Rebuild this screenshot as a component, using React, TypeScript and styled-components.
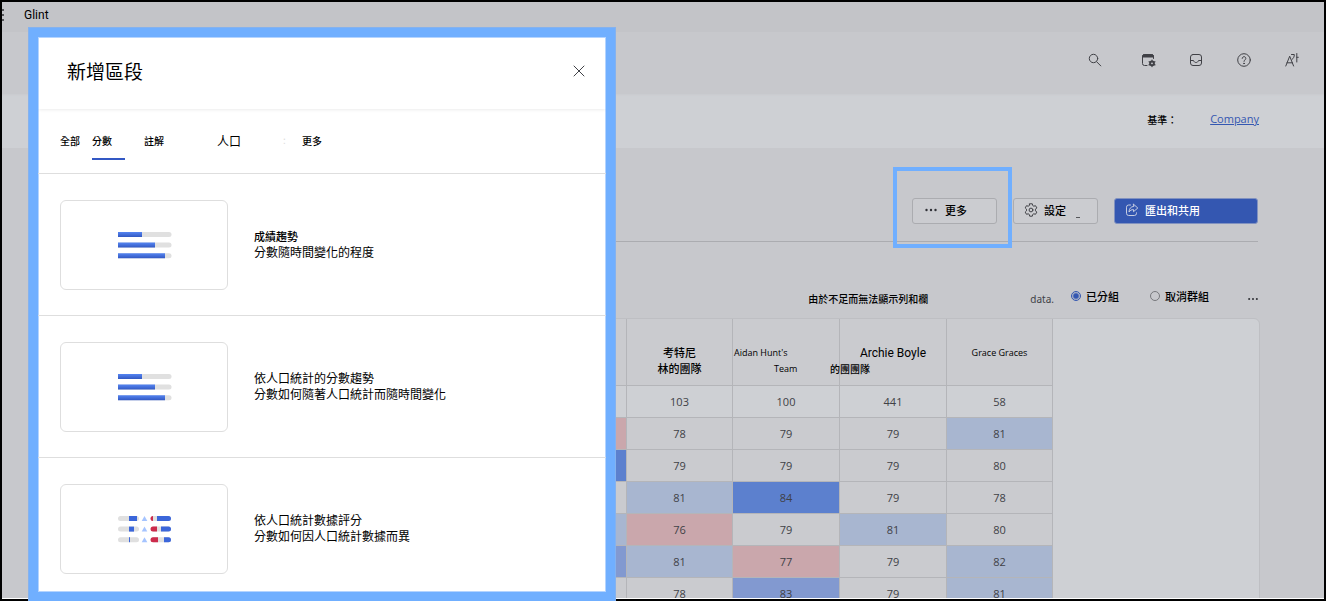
import React from 'react';
import styled, { createGlobalStyle } from 'styled-components';

const latin = '"Open Sans", "Noto Sans CJK TC", sans-serif';
const cjk = '"Noto Sans CJK TC", "Open Sans", sans-serif';

const GlobalStyle = createGlobalStyle`
  * { box-sizing: border-box; }
  body { margin: 0; font-family: ${cjk}; font-size: 11px; color: #000; }
  button { font: inherit; color: inherit; background: none; border: 0; padding: 0; }
`;

const Shell = styled.div`
  position: relative;
  height: 100vh;
  overflow: hidden;
`;

const Frame = styled.div`
  height: 100%;
  display: flex;
  flex-direction: column;
  border: 2px solid #000;
  background: #c7c8cc;
  overflow: hidden;
`;

const AppBar = styled.header`
  flex: none;
  display: flex;
  align-items: center;
  gap: 20px;
  height: 30px;
  padding-bottom: 4px;
  background: #c3c4c8;
  font: 12px/16px Roboto, ${latin};
`;

const Waffle = styled.span`
  width: 2px;
  height: 12px;
  background: repeating-linear-gradient(#55565a 0 2px, transparent 2px 5px);
`;

const Nav = styled.nav`
  flex: none;
  display: flex;
  justify-content: flex-end;
  align-items: center;
  gap: 32px;
  height: 62px;
  padding: 0 24px 6px 0;
  svg { display: block; }
`;

const IconButton = styled.button<{ $after?: number }>`
  width: 16px;
  height: 16px;
  margin-right: ${(p) => p.$after ?? 0}px;
  color: #404146;
`;

const Baseline = styled.div`
  flex: none;
  display: flex;
  justify-content: flex-end;
  align-items: center;
  gap: 33px;
  height: 54px;
  padding: 0 65px 4px 0;
  background: #ced0d4;
  box-shadow: inset 0 2px 2px -1px #c9cace;
  font-size: 10px;
  font-weight: 500;
`;

const Link = styled.a`
  font: 11px/16px ${latin};
  color: #3457b1;
`;

const Main = styled.main`
  flex: 1;
  min-height: 0;
  display: flex;
  flex-direction: column;
  padding: 50px 64px 0 62px;
  overflow: hidden;
  border-bottom: 1px solid #fff;
`;

const Actions = styled.div`
  flex: none;
  display: flex;
  justify-content: flex-end;
  gap: 16px;
  margin-right: 2px;
  padding-bottom: 17px;
  border-bottom: 1px solid #abacb0;
`;

const Highlight = styled.div`
  position: relative;
  &::after {
    content: '';
    position: absolute;
    inset: -31px -15px -24px -19px;
    border: 4px solid #70afff;
    pointer-events: none;
  }
`;

const ActionButton = styled.button<{ $primary?: boolean }>`
  display: flex;
  align-items: center;
  gap: 6px;
  width: ${(p) => (p.$primary ? 144 : 85)}px;
  height: 26px;
  padding: 0 10px 2px;
  border: 1px solid ${(p) => (p.$primary ? '#8192c0' : '#abacb0')};
  border-radius: 3px;
  background: ${(p) => (p.$primary ? '#3457b1' : '#cbccd0')};
  color: ${(p) => (p.$primary ? '#fff' : '#000')};
  font-weight: 500;
  line-height: 16px;
  svg { flex: none; }
`;

const Mark = styled.span`
  align-self: flex-end;
  width: 4px;
  height: 1px;
  margin: 0 0 3px 4px;
  background: #55565a;
`;

const Controls = styled.div`
  flex: none;
  display: flex;
  justify-content: flex-end;
  align-items: center;
  height: 76px;
  padding: 36px 1px 0 0;
  line-height: 16px;
`;

const Notice = styled.span`
  padding-top: 1px;
  font-size: 10px;
  font-weight: 500;
`;

const Data = styled.span`
  margin: 0 17px 0 102px;
  padding-top: 2px;
  font: 11px/16px "Noto Sans", ${latin};
  font-size: 10px;
  color: #404146;
`;

const RadioLabel = styled.label`
  display: flex;
  align-items: center;
  gap: 5px;
  margin-right: 31px;
  padding-bottom: 4px;
  font-weight: 500;
  & + & { margin-right: 38px; }
`;

const Radio = styled.input`
  appearance: none;
  width: 10px;
  height: 10px;
  margin: 0;
  border: 1px solid #77787c;
  border-radius: 50%;
  &:checked {
    border-color: #3457b1;
    background: radial-gradient(circle, #3457b1 2px, transparent 4px);
  }
`;

const OptionsButton = styled.button`
  padding-bottom: 4px;
`;

const Card = styled.section`
  flex: none;
  display: grid;
  grid-template-columns: 1fr 206px;
  border: 1px solid #bebfc3;
  border-radius: 6px;
  background: #ced0d4;
`;

const Table = styled.table`
  width: 100%;
  table-layout: fixed;
  border-collapse: collapse;
  font: 11px/16px ${latin};
  color: #404146;
  text-align: center;
`;

const HeadCell = styled.th`
  height: 66px;
  padding: 18px 0 0;
  border-right: 1px solid #b4b5b9;
  background: #cacbcf;
  color: #000;
  font-weight: 400;
  vertical-align: middle;
`;

const tones = {
  none: '#cacbcf',
  plain: '#ced0d4',
  light: '#a8b6d0',
  mid: '#8299d0',
  strong: '#5c80ce',
  red: '#caa7ac',
};
type Tone = keyof typeof tones;

const Score = styled.td<{ $tone: Tone }>`
  height: 32px;
  padding: 1px 0 0;
  border-top: 1px solid #b4b5b9;
  border-right: 1px solid #b4b5b9;
  background: ${(p) => tones[p.$tone]};
`;

const Name = styled.div<{ $size?: number; $align?: string; $indent?: number; $weight?: number }>`
  margin-left: ${(p) => p.$indent ?? 0}px;
  font-size: ${(p) => p.$size ?? 9}px;
  font-weight: ${(p) => p.$weight ?? 400};
  text-align: ${(p) => p.$align ?? 'center'};
  white-space: nowrap;
`;

const WideName = styled(Name)`
  font-family: Roboto, sans-serif;
`;

const Drawer = styled.aside`
  position: absolute;
  top: 27px;
  bottom: -1px;
  left: 28px;
  width: 588px;
  border: 10px solid #70afff;
  outline: 1px solid #85b2ee;
  outline-offset: -1px;
  background: #fff;
  box-shadow: inset 0 0 0 1px #b4d4ff;
  display: flex;
  flex-direction: column;
  overflow: hidden;
`;

const DrawerHead = styled.div`
  flex: none;
  display: flex;
  align-items: center;
  justify-content: space-between;
  height: 72px;
  padding: 0 21px 4px 29px;
  background: linear-gradient(#fff, #fff) 1px 1px / calc(100% - 2px) 100% no-repeat;
  box-shadow: 0 2px 3px -1px #00000014;
`;

const Title = styled.h2`
  margin: 0;
  font-size: 19px;
  line-height: 28px;
  font-weight: 400;
`;

const Close = styled.button`
  display: flex;
  svg { display: block; }
`;

const Tabs = styled.div`
  flex: none;
  display: flex;
  height: 65px;
  padding: 19px 0 0 22px;
  border-bottom: 1px solid #dedede;
`;

const Tab = styled.button<{ $width: number; $size?: number; $active?: boolean }>`
  width: ${(p) => p.$width}px;
  height: 32px;
  padding-bottom: 6px;
  border-bottom: 2px solid ${(p) => (p.$active ? '#3358c4' : 'transparent')};
  font-size: ${(p) => p.$size ?? 10}px;
  font-weight: ${(p) => (p.$size === 12 ? 400 : 500)};
  text-align: left;
`;

const TabGap = styled.span`
  width: 19px;
`;

const Dots = styled.span`
  width: 19px;
  padding-top: 4px;
  color: #ddd;
  font-size: 10px;
`;

const Option = styled.div`
  flex: none;
  display: flex;
  align-items: center;
  gap: 26px;
  height: 142px;
  padding-left: 22px;
  border-bottom: 1px solid #dedede;
  font-size: 12px;
  line-height: 16px;
  white-space: nowrap;
  &:last-child { border-bottom: 0; }
`;

const Thumb = styled.button`
  display: flex;
  align-items: center;
  justify-content: center;
  width: 168px;
  height: 90px;
  padding-left: 2px;
  border: 1px solid #dedede;
  border-radius: 6px;
`;

const OptionText = styled.div`
  padding-bottom: 2px;
`;

const OptionTitle = styled.div<{ $small?: boolean }>`
  font-size: ${(p) => (p.$small ? 11 : 12)}px;
  font-weight: ${(p) => (p.$small ? 500 : 400)};
`;

const stroke = { fill: 'none', stroke: 'currentColor', strokeWidth: 1, strokeLinecap: 'round', strokeLinejoin: 'round' } as const;

const SearchIcon = () => (
  <svg width="16" height="16" viewBox="0 0 16 16" {...stroke}>
    <circle cx="6.5" cy="6.5" r="4.2" />
    <path d="M9.6 9.7 13.8 13.9" />
  </svg>
);

const CalendarIcon = () => (
  <svg width="16" height="16" viewBox="0 0 16 16" {...stroke}>
    <path d="M7 13.5H4.500A2 2 0 0 1 2.500 11.500V4.500A2 2 0 0 1 4.500 2.500H11.500A2 2 0 0 1 13.500 4.500V6.500" />
    <path d="M2.500 4.500A2 2 0 0 1 4.500 2.500H11.500A2 2 0 0 1 13.500 4.500V5H2.500Z" fill="currentColor" />
    <circle cx="12" cy="11.300" r="2" strokeWidth="1.800" />
    <path d="M12 8v6.600M9.100 9.700l5.800 3.200M14.900 9.700l-5.800 3.200" strokeWidth="1.200" />
    <circle cx="12" cy="11.300" r=".9" fill="#c7c8cc" stroke="none" />
  </svg>
);

const InboxIcon = () => (
  <svg width="16" height="16" viewBox="0 0 16 16" {...stroke}>
    <rect x="2.500" y="2.500" width="11" height="11" rx="2.500" />
    <path d="M2.500 8.500H5.500C6 10 7 10.500 8 10.500S10 10 10.500 8.500H13.500" />
  </svg>
);

const HelpIcon = () => (
  <svg width="16" height="16" viewBox="0 0 16 16" {...stroke}>
    <circle cx="8" cy="8" r="6.300" />
    <path d="M6.200 6.400A1.800 1.800 0 1 1 9 7.900C8.300 8.400 8 8.700 8 9.400" />
    <circle cx="8" cy="11.400" r=".4" fill="currentColor" />
  </svg>
);

const LanguageIcon = () => (
  <svg width="16" height="16" viewBox="0 0 16 16" {...stroke}>
    <path d="M1.800 14 5.700 4.200 9.600 14M3 10.800H8.400" />
    <path d="M7.500 2.500H10.300C10.300 4.700 9.700 6.200 8 7.500M12.800 1.500V10M12.800 5.300H14.300" />
  </svg>
);

const MoreIcon = ({ size }: { size: number }) => (
  <svg width={size} height="4" viewBox="0 0 14 4" fill="#303136">
    <circle cx="2.500" cy="2" r="1.200" />
    <circle cx="7" cy="2" r="1.200" />
    <circle cx="11.500" cy="2" r="1.200" />
  </svg>
);

const GearIcon = () => (
  <svg width="14" height="14" viewBox="0 0 14 14" {...stroke} stroke="#404146">
    <path d="M5.700.800h2.600l.4 1.700 1.100.7 1.700-.5 1.300 2.200-1.300 1.300v1.600l1.300 1.300-1.300 2.200-1.700-.5-1.100.7-.4 1.700H5.700l-.4-1.700-1.100-.7-1.700.5-1.300-2.200 1.300-1.300V6.200L1.200 4.900l1.300-2.200 1.700.5 1.100-.7z" />
    <circle cx="7" cy="7" r="1.900" />
  </svg>
);

const ShareIcon = () => (
  <svg width="14" height="14" viewBox="0 0 14 14" {...stroke} stroke="#c6cde2">
    <path d="M5.500 2H3.700A2.200 2.200 0 0 0 1.500 4.200V10.300A2.200 2.200 0 0 0 3.700 12.500H9.300A2.200 2.200 0 0 0 11.500 10.300V9.800" />
    <path d="M8.500 1.200 12.800 5 8.500 8.700V6.600C6.500 6.600 5.200 7.200 4 9 4.100 5.600 5.800 3.700 8.500 3.400Z" />
  </svg>
);

const TrendArt = () => (
  <svg width="54" height="28" viewBox="0 0 54 28">
    <defs>
      <linearGradient id="bar" x2="0" y2="1">
        <stop stopColor="#5585f2" />
        <stop offset="1" stopColor="#3258c2" />
      </linearGradient>
    </defs>
    {[24, 37, 47].map((w, i) => (
      <g key={w} transform={`translate(0 ${i * 10.600 + 1})`}>
        <path d="M0 0H51a2.500 2.500 0 0 1 0 5H0Z" fill="#e0e0e0" />
        <path d={`M0 0H${w}V5H0Z`} fill="url(#bar)" />
      </g>
    ))}
  </svg>
);

const SplitArt = () => (
  <svg width="54" height="28" viewBox="0 0 54 28">
    {[
      [11, 8, 2, 39],
      [11, 5, 6, 43],
      [11, 1, 7, 46],
    ].map(([x, w, red, blue], i) => (
      <g key={i} transform={`translate(0 ${i * 10.600 + 1})`}>
        <rect width="21" height="5" rx="2.500" fill="#e0e0e0" />
        <rect x={x} width={w} height="5" fill="#3b66da" />
        <path d="M26.500 0 29.300 5H23.700Z" fill="#a5c4ff" />
        <rect x="33" width="20" height="5" rx="2.500" fill="#e0e0e0" />
        <path d={`M35 0H${33 + red}V5H35a2.500 2.500 0 0 1 0-5Z`} fill="#cc2b4c" />
        <path d={`M${blue} 0H50.500a2.500 2.500 0 0 1 0 5H${blue}Z`} fill="#3b66da" />
      </g>
    ))}
  </svg>
);

const rows: { tones: Tone[]; values: number[] }[] = [
  { values: [103, 100, 441, 58], tones: ['plain', 'plain', 'plain', 'plain', 'plain'] },
  { values: [78, 79, 79, 81], tones: ['red', 'none', 'none', 'none', 'light'] },
  { values: [79, 79, 79, 80], tones: ['strong', 'none', 'none', 'none', 'none'] },
  { values: [81, 84, 79, 78], tones: ['none', 'light', 'strong', 'none', 'none'] },
  { values: [76, 79, 81, 80], tones: ['light', 'red', 'none', 'light', 'none'] },
  { values: [81, 77, 79, 82], tones: ['mid', 'light', 'red', 'none', 'light'] },
  { values: [78, 83, 79, 81], tones: ['none', 'none', 'mid', 'none', 'light'] },
];

const options = [
  { title: '成績趨勢', text: '分數隨時間變化的程度', small: true, art: <TrendArt /> },
  { title: '依人口統計的分數趨勢', text: '分數如何隨著人口統計而隨時間變化', art: <TrendArt /> },
  { title: '依人口統計數據評分', text: '分數如何因人口統計數據而異', art: <SplitArt /> },
];

export default function App() {
  return (
    <Shell>
      <GlobalStyle />
      <Frame>
        <AppBar>
          <Waffle />
          Glint
        </AppBar>
        <Nav>
          <IconButton $after={5} aria-label="搜尋"><SearchIcon /></IconButton>
          <IconButton aria-label="行事曆"><CalendarIcon /></IconButton>
          <IconButton aria-label="收件匣"><InboxIcon /></IconButton>
          <IconButton aria-label="說明"><HelpIcon /></IconButton>
          <IconButton aria-label="語言"><LanguageIcon /></IconButton>
        </Nav>
        <Baseline>
          <span>基準：</span>
          <Link href="#company">Company</Link>
        </Baseline>
        <Main>
          <Actions>
            <Highlight>
              <ActionButton><MoreIcon size={16} />更多</ActionButton>
            </Highlight>
            <ActionButton><GearIcon />設定<Mark /></ActionButton>
            <ActionButton $primary><ShareIcon />匯出和共用</ActionButton>
          </Actions>
          <Controls>
            <Notice>由於不足而無法顯示列和欄</Notice>
            <Data>data.</Data>
            <RadioLabel><Radio type="radio" name="group" defaultChecked />已分組</RadioLabel>
            <RadioLabel><Radio type="radio" name="group" />取消群組</RadioLabel>
            <OptionsButton aria-label="其他選項"><MoreIcon size={12} /></OptionsButton>
          </Controls>
          <Card>
            <Table>
              <colgroup>
                <col />
                <col width="107" />
                <col width="106" />
                <col width="107" />
                <col width="107" />
                <col width="106" />
              </colgroup>
              <thead>
                <tr>
                  <HeadCell />
                  <HeadCell />
                  <HeadCell>
                    <Name $size={11} $weight={500}>考特尼</Name>
                    <Name $size={11} $weight={500}>林的團隊</Name>
                  </HeadCell>
                  <HeadCell>
                    <Name $align="left" $indent={1}>Aidan Hunt's</Name>
                    <Name $align="left" $indent={41}>Team</Name>
                  </HeadCell>
                  <HeadCell>
                    <WideName $size={12}>Archie Boyle</WideName>
                    <Name $size={10} $weight={500} $align="left" $indent={-10}>的團團隊</Name>
                  </HeadCell>
                  <HeadCell>
                    <Name>Grace Graces</Name>
                    <Name>&nbsp;</Name>
                  </HeadCell>
                </tr>
              </thead>
              <tbody>
                {rows.map((row, i) => (
                  <tr key={i}>
                    <Score $tone="none" />
                    <Score $tone={row.tones[0]} />
                    {row.values.map((v, j) => (
                      <Score key={j} $tone={row.tones[j + 1]}>{v}</Score>
                    ))}
                  </tr>
                ))}
              </tbody>
            </Table>
          </Card>
        </Main>
      </Frame>
      <Drawer>
        <DrawerHead>
          <Title>新增區段</Title>
          <Close aria-label="關閉">
            <svg width="12" height="12" viewBox="0 0 12 12" {...stroke} stroke="#404146">
              <path d="M1 1 11 11M11 1 1 11" />
            </svg>
          </Close>
        </DrawerHead>
        <Tabs>
          <Tab $width={32}>全部</Tab>
          <Tab $width={33} $active>分數</Tab>
          <TabGap />
          <Tab $width={73}>註解</Tab>
          <Tab $width={66} $size={12}>人口</Tab>
          <Dots>:</Dots>
          <Tab $width={32}>更多</Tab>
        </Tabs>
        {options.map((o) => (
          <Option key={o.title}>
            <Thumb aria-label={o.title}>{o.art}</Thumb>
            <OptionText>
              <OptionTitle $small={o.small}>{o.title}</OptionTitle>
              <div>{o.text}</div>
            </OptionText>
          </Option>
        ))}
      </Drawer>
    </Shell>
  );
}
